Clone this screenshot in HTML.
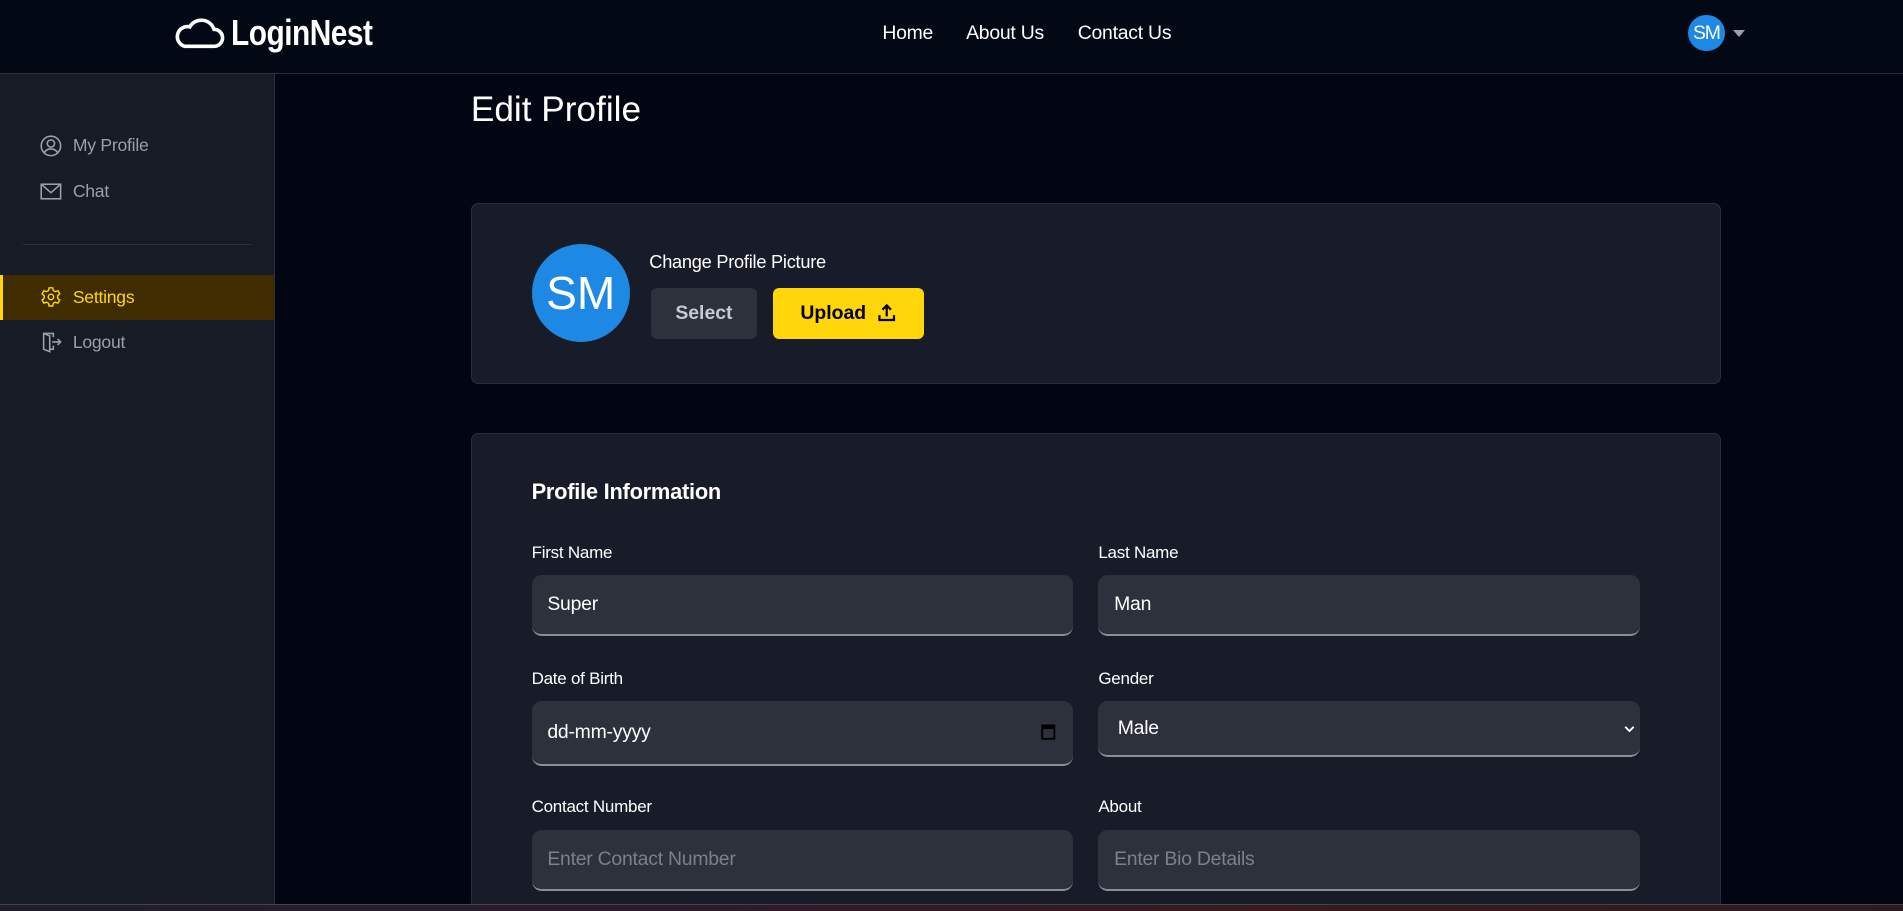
<!DOCTYPE html>
<html><head><meta charset="utf-8">
<style>
html{zoom:1.21365;overflow:hidden}
*{box-sizing:border-box;margin:0;padding:0}
body{width:1568px;height:751px;overflow:hidden;background:#010612;font-family:"Liberation Sans",sans-serif;color:#fff;position:relative}
.hdr{position:absolute;left:0;top:0;width:1568px;height:61px;background:#020814;border-bottom:1px solid #2a2f3a}
.logo{position:absolute;left:143px;top:10px;display:flex;align-items:center}
.logo span{font-family:"Liberation Sans Narrow","Liberation Sans",sans-serif;font-weight:bold;font-size:30px;letter-spacing:-0.5px;margin-left:5px;transform:scaleX(0.82);transform-origin:left;display:inline-block}
.nav{position:absolute;top:18px;font-size:16px;color:#fff;letter-spacing:-0.2px}
.av{position:absolute;left:1391px;top:12px;width:30px;height:30px;border-radius:50%;background:#1e88e5;font-size:16px;text-align:center;line-height:30px;letter-spacing:-1px}
.caret{position:absolute;left:1428px;top:25px;border-left:5px solid transparent;border-right:5px solid transparent;border-top:6px solid #9aa0aa}
.side{position:absolute;left:0;top:61px;width:227px;height:684px;background:#161b26;border-right:1px solid #2a2f3a}
.it{position:absolute;left:33px;display:flex;align-items:center;font-size:14.5px;color:#9aa0aa;letter-spacing:-0.2px}
.it svg{margin-right:9px}
.div{position:absolute;left:19px;top:140px;width:188px;height:1px;background:#2a2f3a}
.act{position:absolute;left:0;top:166px;width:226px;height:37px;background:#3f2c00;border-left:3px solid #ffd60a}
h1{position:absolute;left:388px;top:74px;font-size:29px;font-weight:normal}
.card{position:absolute;left:388px;width:1030px;background:#171c28;border:1px solid #2a2f3a;border-radius:6px}
.big{position:absolute;left:438px;top:201px;width:81px;height:81px;border-radius:50%;background:#1e88e5;text-align:center;line-height:81px;font-size:38px}
.btn{position:absolute;top:237px;height:42px;border-radius:5px;font-weight:bold;font-size:16px;display:flex;align-items:center;justify-content:center}
.lbl{position:absolute;font-size:14px;color:#fff;letter-spacing:-0.2px}
.in{position:absolute;height:50px;width:446px;background:#2c313c;border-radius:8px;border-bottom:2px solid #8a8e96;font-size:16px;padding-left:13px;display:flex;align-items:center;letter-spacing:-0.2px}
.ph{color:#7b808a}
.strip{position:absolute;left:0;top:745px;width:1568px;height:6px;background:linear-gradient(90deg,#1f1c2c,#2a1a2c,#3a1a1e,#2a1a1e);border-top:1px solid #444;z-index:10}
</style></head><body>
<div class="hdr">
  <div class="logo">
    <svg width="42" height="28" viewBox="0 0 42 28"><path d="M9 25 H33 A7 7 0 0 0 33 11 A11 11 0 0 0 13 9 A8 8 0 0 0 9 25 Z" fill="none" stroke="#fff" stroke-width="3"/></svg>
    <span>LoginNest</span>
  </div>
  <div class="nav" style="left:727px">Home</div>
  <div class="nav" style="left:796px">About Us</div>
  <div class="nav" style="left:888px">Contact Us</div>
  <div class="av">SM</div><div class="caret"></div>
</div>
<div class="side">
  <div class="it" style="top:50px"><svg width="18" height="18" viewBox="0 0 18 18" fill="none" stroke="#9aa0aa" stroke-width="1.3"><circle cx="9" cy="9" r="8"/><circle cx="9" cy="7" r="3"/><path d="M3.5 14.5c1.5-2.5 3.5-3 5.5-3s4 .5 5.5 3"/></svg>My Profile</div>
  <div class="it" style="top:88px"><svg width="18" height="14" viewBox="0 0 18 14" fill="none" stroke="#9aa0aa" stroke-width="1.3"><rect x="1" y="1" width="16" height="12"/><path d="M1 1l8 7 8-7"/></svg>Chat</div>
  <div class="div"></div>
  <div class="act"></div>
  <div class="it" style="top:175px;color:#ffd60a"><svg width="18" height="18" viewBox="0 0 24 24" fill="none" stroke="#ffd60a" stroke-width="1.6"><circle cx="12" cy="12" r="3"/><path d="M10 2h4l.6 3 2.2 1.2 2.9-1 2 3.4-2.3 2v2.8l2.3 2-2 3.4-2.9-1-2.2 1.2-.6 3h-4l-.6-3-2.2-1.2-2.9 1-2-3.4 2.3-2v-2.8l-2.3-2 2-3.4 2.9 1L9.4 5z"/></svg>Settings</div>
  <div class="it" style="top:212px"><svg width="18" height="18" viewBox="0 0 18 18" fill="none" stroke="#9aa0aa" stroke-width="1.3"><path d="M11 5V2H3v13l5 2V4L3 2"/><path d="M11 12v3H8"/><path d="M10 9h7M14.5 6.5L17 9l-2.5 2.5"/></svg>Logout</div>
</div>
<h1>Edit Profile</h1>
<div class="card" style="top:167px;height:149px"></div>
<div class="big">SM</div>
<div style="position:absolute;left:535px;top:208px;font-size:15px;letter-spacing:-0.2px">Change Profile Picture</div>
<div class="btn" style="left:536px;width:88px;background:#2c313c;color:#c6cad2">Select</div>
<div class="btn" style="left:637px;width:124px;background:#ffd60a;color:#000">Upload&nbsp;&nbsp;<svg width="16" height="16" viewBox="0 0 16 16" fill="none" stroke="#000" stroke-width="1.8"><path d="M8 11V2M4.5 5.5L8 2l3.5 3.5M2 10v4h12v-4"/></svg></div>
<div class="card" style="top:357px;height:392px"></div>
<div style="position:absolute;left:438px;top:395px;font-size:18px;font-weight:bold;letter-spacing:-0.2px">Profile Information</div>
<div class="lbl" style="left:438px;top:447px">First Name</div>
<div class="lbl" style="left:905px;top:447px">Last Name</div>
<div class="in" style="left:438px;top:474px">Super</div>
<div class="in" style="left:905px;top:474px">Man</div>
<div class="lbl" style="left:438px;top:551px">Date of Birth</div>
<div class="lbl" style="left:905px;top:551px">Gender</div>
<div class="in" style="left:438px;top:578px;height:53px">dd-mm-yyyy<svg style="position:absolute;right:14px;top:18px" width="12" height="14" viewBox="0 0 12 14"><rect x="1" y="2" width="10" height="11" fill="none" stroke="#000" stroke-width="1.5"/><rect x="1" y="2" width="10" height="3" fill="#000"/></svg></div>
<div class="in" style="left:905px;top:578px;height:46px;padding-left:16px">Male<svg style="position:absolute;right:4px;top:19px" width="9" height="7" viewBox="0 0 9 7"><path d="M1 1.5l3.5 3.5 3.5-3.5" fill="none" stroke="#fff" stroke-width="1.5"/></svg></div>
<div class="lbl" style="left:438px;top:657px">Contact Number</div>
<div class="lbl" style="left:905px;top:657px">About</div>
<div class="in ph" style="left:438px;top:684px">Enter Contact Number</div>
<div class="in ph" style="left:905px;top:684px">Enter Bio Details</div>
<div class="strip"></div>
</body></html>
